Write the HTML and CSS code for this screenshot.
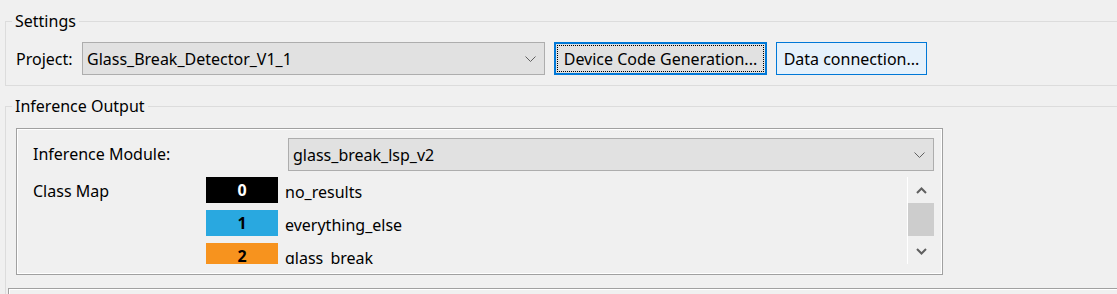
FILE: index.html
```html
<!DOCTYPE html>
<html lang="en">
<head>
  <meta charset="UTF-8">
  <title>Settings</title>
  <link rel="stylesheet" href="styles.css">
</head>
<body>
  <fieldset class="group settings-group">
    <legend>Settings</legend>
    <div class="settings-row">
      <span class="project-label">Project:</span>
      <div class="combo project-combo">
        <span class="combo-text">Glass_Break_Detector_V1_1</span>
        <svg class="combo-arrow" width="11" height="6" viewBox="0 0 11 6"><polyline points="0.5,0.5 5.5,5.5 10.5,0.5" fill="none" stroke="#606060" stroke-width="1"/></svg>
      </div>
      <button class="btn btn-focused"><span class="focus-rect">Device Code Generation...</span></button>
      <button class="btn btn-hover">Data connection...</button>
    </div>
  </fieldset>

  <fieldset class="group inference-group">
    <legend>Inference Output</legend>
    <div class="inference-panel">
      <div class="panel-row">
        <span class="module-label">Inference Module:</span>
        <div class="combo module-combo">
          <span class="combo-text">glass_break_lsp_v2</span>
          <svg class="combo-arrow" width="11" height="6" viewBox="0 0 11 6"><polyline points="0.5,0.5 5.5,5.5 10.5,0.5" fill="none" stroke="#606060" stroke-width="1"/></svg>
        </div>
      </div>
      <div class="panel-row classmap-row">
        <span class="classmap-label">Class Map</span>
        <div class="classmap">
          <div class="classmap-list">
            <div class="class-item">
              <span class="class-swatch swatch-black">0</span>
              <span class="class-name">no_results</span>
            </div>
            <div class="class-item">
              <span class="class-swatch swatch-blue">1</span>
              <span class="class-name">everything_else</span>
            </div>
            <div class="class-item">
              <span class="class-swatch swatch-orange">2</span>
              <span class="class-name">glass_break</span>
            </div>
          </div>
          <div class="scrollbar">
            <div class="scroll-btn">
              <svg width="11" height="7" viewBox="0 0 11 7"><polyline points="1,6 5.5,1.5 10,6" fill="none" stroke="#606060" stroke-width="2"/></svg>
            </div>
            <div class="scroll-thumb"></div>
            <div class="scroll-track"></div>
            <div class="scroll-btn">
              <svg width="11" height="7" viewBox="0 0 11 7"><polyline points="1,1 5.5,5.5 10,1" fill="none" stroke="#606060" stroke-width="2"/></svg>
            </div>
          </div>
        </div>
      </div>
    </div>
    <div class="bottom-box"></div>
  </fieldset>
</body>
</html>
```

FILE: styles.css
```css
body {
  margin: 0;
  height: 294px;
  overflow: hidden;
  background: #f0f0f0;
  color: #000;
  font-family: "Segoe UI", "Noto Sans", sans-serif;
  font-size: 16px;
}

.group {
  box-sizing: border-box;
  width: 1200px;
  margin: 0 0 0 5px;
  padding: 0;
  border: 1px solid #dcdcdc;
  min-width: 0;
}

.group legend {
  margin-left: 6px;
  padding: 0 3px;
  line-height: 20px;
}

.settings-group {
  margin-top: 11px;
  padding: 11px 0 10px 0;
}

.settings-row {
  display: flex;
  align-items: center;
  gap: 9px;
}

.project-label {
  flex: none;
  margin-left: 10px;
  width: 57px;
  white-space: nowrap;
}

.combo {
  box-sizing: border-box;
  height: 33px;
  display: flex;
  align-items: center;
  justify-content: space-between;
  background: #e1e1e1;
  border: 1px solid #adadad;
  padding: 0 8px 0 4px;
}

.project-combo {
  flex: none;
  width: 463px;
}

.btn {
  flex: none;
  box-sizing: border-box;
  height: 33px;
  font: inherit;
  color: #000;
  padding: 0 4px;
  white-space: nowrap;
}

.btn-focused {
  width: 213px;
  background: #e1e1e1;
  border: 2px solid #0078d7;
  padding: 1px;
}

.focus-rect {
  display: flex;
  align-items: center;
  justify-content: center;
  height: 100%;
  box-sizing: border-box;
  border: 1px dotted #000;
}

.btn-hover {
  width: 151px;
  background: #e5f1fb;
  border: 1px solid #0078d7;
}

.inference-group {
  margin-top: 10px;
  padding: 12px 0 0 0;
  height: 260px;
}

.inference-panel {
  box-sizing: border-box;
  width: 927px;
  height: 147px;
  margin-left: 10px;
  border: 1px solid #a0a0a0;
  box-shadow: inset 0 0 0 1px #fff;
  padding: 9px 8px 0 16px;
}

.panel-row {
  display: flex;
}

.module-label {
  width: 255px;
  line-height: 33px;
}

.module-combo {
  flex: 1;
}

.classmap-row {
  margin-top: 6px;
}

.classmap-label {
  width: 173px;
  line-height: 28px;
}

.classmap {
  flex: 1;
  display: flex;
  height: 87px;
  overflow: hidden;
}

.classmap-list {
  flex: 1;
}

.class-item {
  display: flex;
  align-items: center;
  height: 26px;
  margin-bottom: 7px;
}

.class-swatch {
  width: 72px;
  height: 26px;
  line-height: 26px;
  text-align: center;
  font-weight: bold;
}

.swatch-black {
  background: #000;
  color: #fff;
}

.swatch-blue {
  background: #29a8e0;
}

.swatch-orange {
  background: #f7931e;
}

.class-name {
  margin-left: 7px;
  padding-top: 3px;
}

.scrollbar {
  width: 26px;
  border-left: 1px solid #fff;
  display: flex;
  flex-direction: column;
}

.scroll-btn {
  height: 26px;
  display: flex;
  align-items: center;
  justify-content: center;
}

.scroll-thumb {
  height: 33px;
  background: #cdcdcd;
}

.scroll-track {
  flex: 1;
}

.bottom-box {
  margin: 13px 0 0 2px;
  height: 40px;
  border-top: 1px solid #a0a0a0;
  border-left: 1px solid #a0a0a0;
  box-shadow: inset 1px 1px 0 #fff;
}
```
